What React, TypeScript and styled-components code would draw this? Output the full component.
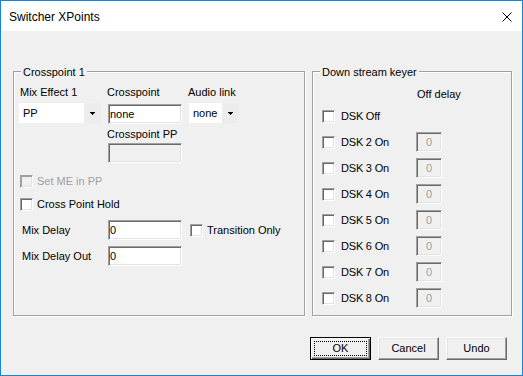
import React from "react";
import styled, { createGlobalStyle, css } from "styled-components";

const GlobalStyle = createGlobalStyle`
  html, body { margin: 0; padding: 0; background: #ffffff; }
  body {
    font-family: "Liberation Sans", Arial, sans-serif;
    font-size: 11px;
    line-height: 13px;
    color: #000;
  }
  * { box-sizing: border-box; }
`;

const Window = styled.div`
  width: 523px;
  height: 376px;
  border: 1px solid #1883d7;
  background: #f0f0f0;
  display: flex;
  flex-direction: column;
`;

const TitleBar = styled.div`
  height: 30px;
  flex: none;
  background: #ffffff;
  display: flex;
  align-items: center;
  justify-content: space-between;
  padding: 1px 10px 0 8px;
`;

const Title = styled.span`
  font-size: 12px;
  line-height: 16px;
`;

const Content = styled.div`
  display: flex;
  flex-direction: column;
  padding: 40px 0 0 12px;
`;

const GroupsRow = styled.div`
  display: flex;
  gap: 7px;
`;

const Group = styled.div<{ $w: number }>`
  position: relative;
  width: ${(p) => p.$w}px;
  height: 245px;
  border: 1px solid #a0a0a0;
  box-shadow: inset 1px 1px 0 #ffffff, 1px 1px 0 #ffffff;
  display: flex;
  flex-direction: column;
`;

const Legend = styled.span`
  position: absolute;
  top: -6px;
  left: 7px;
  padding: 0 2px;
  background: #f0f0f0;
  white-space: nowrap;
`;

const Label = styled.div<{ $disabled?: boolean; $pl?: number }>`
  height: 13px;
  white-space: nowrap;
  padding-left: ${(p) => p.$pl ?? 0}px;
  color: ${(p) => (p.$disabled ? "#a0a0a0" : "#000")};
`;

const TopRow = styled.div`
  display: flex;
  margin: 14px 0 0 5px;
  gap: 6px;
  align-items: flex-start;
`;

const Column = styled.div<{ $w: number }>`
  width: ${(p) => p.$w}px;
  display: flex;
  flex-direction: column;
`;

const sunken = css`
  border-top: 1px solid #a0a0a0;
  border-left: 1px solid #a0a0a0;
  border-bottom: 1px solid #ffffff;
  border-right: 1px solid #ffffff;
  box-shadow: inset 1px 1px 0 #696969, inset -1px -1px 0 #e3e3e3;
`;

const Edit = styled.div<{ $w: number; $mt?: number; $ml?: number; $disabled?: boolean; $center?: boolean }>`
  ${sunken};
  width: ${(p) => p.$w}px;
  height: 20px;
  margin-top: ${(p) => p.$mt ?? 0}px;
  margin-left: ${(p) => p.$ml ?? 0}px;
  background: ${(p) => (p.$disabled ? "#f0f0f0" : "#ffffff")};
  color: ${(p) => (p.$disabled ? "#a0a0a0" : "#000")};
  padding-left: ${(p) => (p.$center ? 0 : 1)}px;
  line-height: 18px;
  text-align: ${(p) => (p.$center ? "center" : "left")};
  white-space: nowrap;
  overflow: hidden;
`;

const Combo = styled.div<{ $w: number; $ml?: number }>`
  width: ${(p) => p.$w}px;
  height: 20px;
  margin-top: 4px;
  margin-left: ${(p) => p.$ml ?? 0}px;
  background: #ffffff;
  display: flex;
  align-items: stretch;
`;

const ComboText = styled.div`
  flex: 1;
  padding-left: 4px;
  line-height: 20px;
`;

const DropButton = styled.div`
  width: 17px;
  background: #ececec;
  display: flex;
  align-items: center;
  justify-content: center;
`;

const CheckRow = styled.div<{ $mt: number; $ml: number }>`
  display: flex;
  align-items: center;
  height: 13px;
  margin-top: ${(p) => p.$mt}px;
  margin-left: ${(p) => p.$ml}px;
  gap: 4px;
`;

const Box = styled.span<{ $disabled?: boolean }>`
  display: inline-block;
  flex: none;
  width: 13px;
  height: 13px;
  border-top: 1px solid #a0a0a0;
  border-left: 1px solid #a0a0a0;
  border-bottom: 1px solid #ffffff;
  border-right: 1px solid #ffffff;
  box-shadow: ${(p) =>
    p.$disabled
      ? "inset 1px 1px 0 #a0a0a0, inset -1px -1px 0 #e3e3e3"
      : "inset 1px 1px 0 #696969, inset -1px -1px 0 #e3e3e3"};
  background: ${(p) => (p.$disabled ? "#f0f0f0" : "#ffffff")};
`;

const DelayRow = styled.div<{ $mt: number }>`
  display: flex;
  align-items: center;
  height: 20px;
  margin-top: ${(p) => p.$mt}px;
  margin-left: 8px;
`;

const RowLabel = styled.div<{ $w: number }>`
  width: ${(p) => p.$w}px;
  white-space: nowrap;
`;

const InlineCheck = styled.div`
  display: flex;
  align-items: center;
  gap: 4px;
  margin-left: 8px;
`;

const DskList = styled.div`
  display: flex;
  flex-direction: column;
  margin-top: 2px;
  letter-spacing: -0.2px;
`;

const DskRow = styled.div`
  display: flex;
  align-items: center;
  height: 26px;
  padding-left: 9px;
`;

const DskLabel = styled.div`
  width: 75px;
  margin-left: 6px;
  white-space: nowrap;
`;

const ButtonRow = styled.div`
  display: flex;
  justify-content: flex-end;
  gap: 7px;
  margin-top: 21px;
  padding-right: 15px;
`;

const Button = styled.div<{ $default?: boolean }>`
  position: relative;
  width: 61px;
  height: 23px;
  background: #f0f0f0;
  display: flex;
  align-items: center;
  justify-content: center;
  ${(p) =>
    p.$default
      ? css`
          border: 1px solid #000;
          box-shadow: inset 1px 1px 0 #ffffff, inset -1px -1px 0 #696969,
            inset -2px -2px 0 #a0a0a0;
          &::after {
            content: "";
            position: absolute;
            inset: 3px;
            border: 1px dotted #000;
          }
        `
      : css`
          border-top: 1px solid #ffffff;
          border-left: 1px solid #ffffff;
          border-bottom: 1px solid #696969;
          border-right: 1px solid #696969;
          box-shadow: inset -1px -1px 0 #a0a0a0, inset 1px 1px 0 #e3e3e3;
        `}
`;

const Arrow = () => (
  <svg width="5" height="3" viewBox="0 0 5 3" shapeRendering="crispEdges">
    <rect x="0" y="0" width="5" height="1" fill="#000" />
    <rect x="1" y="1" width="3" height="1" fill="#000" />
    <rect x="2" y="2" width="1" height="1" fill="#000" />
  </svg>
);

const CloseIcon = () => (
  <svg width="10" height="10" viewBox="0 0 10 10">
    <path d="M0.5 0.5 L9.5 9.5 M9.5 0.5 L0.5 9.5" stroke="#000" strokeWidth="1" fill="none" />
  </svg>
);

const dsk = ["DSK 2 On", "DSK 3 On", "DSK 4 On", "DSK 5 On", "DSK 6 On", "DSK 7 On", "DSK 8 On"];

export default function App() {
  return (
    <>
      <GlobalStyle />
      <Window>
        <TitleBar>
          <Title>Switcher XPoints</Title>
          <CloseIcon />
        </TitleBar>
        <Content>
          <GroupsRow>
            <Group $w={292}>
              <Legend>Crosspoint 1</Legend>
              <TopRow>
                <Column $w={82}>
                  <Label $pl={1}>Mix Effect 1</Label>
                  <Combo $w={82}>
                    <ComboText>PP</ComboText>
                    <DropButton>
                      <Arrow />
                    </DropButton>
                  </Combo>
                </Column>
                <Column $w={75}>
                  <Label>Crosspoint</Label>
                  <Edit $w={74} $mt={5} $ml={1}>none</Edit>
                  <Label style={{ marginTop: 4 }}>Crosspoint PP</Label>
                  <Edit $w={74} $mt={2} $ml={1} $disabled />
                </Column>
                <Column $w={51}>
                  <Label>Audio link</Label>
                  <Combo $w={50} $ml={1}>
                    <ComboText>none</ComboText>
                    <DropButton>
                      <Arrow />
                    </DropButton>
                  </Combo>
                </Column>
              </TopRow>
              <CheckRow $mt={12} $ml={6}>
                <Box $disabled />
                <Label $disabled>Set ME in PP</Label>
              </CheckRow>
              <CheckRow $mt={10} $ml={6}>
                <Box />
                <Label>Cross Point Hold</Label>
              </CheckRow>
              <DelayRow $mt={9}>
                <RowLabel $w={86}>Mix Delay</RowLabel>
                <Edit $w={74}>0</Edit>
                <InlineCheck>
                  <Box />
                  <span>Transition Only</span>
                </InlineCheck>
              </DelayRow>
              <DelayRow $mt={6}>
                <RowLabel $w={86}>Mix Delay Out</RowLabel>
                <Edit $w={74}>0</Edit>
              </DelayRow>
            </Group>
            <Group $w={200}>
              <Legend>Down stream keyer</Legend>
              <Label $pl={104} style={{ marginTop: 16 }}>
                Off delay
              </Label>
              <DskList>
                <DskRow>
                  <Box />
                  <DskLabel>DSK Off</DskLabel>
                </DskRow>
                {dsk.map((d) => (
                  <DskRow key={d}>
                    <Box />
                    <DskLabel>{d}</DskLabel>
                    <Edit $w={26} $disabled $center>
                      0
                    </Edit>
                  </DskRow>
                ))}
              </DskList>
            </Group>
          </GroupsRow>
          <ButtonRow>
            <Button $default>OK</Button>
            <Button>Cancel</Button>
            <Button>Undo</Button>
          </ButtonRow>
        </Content>
      </Window>
    </>
  );
}
